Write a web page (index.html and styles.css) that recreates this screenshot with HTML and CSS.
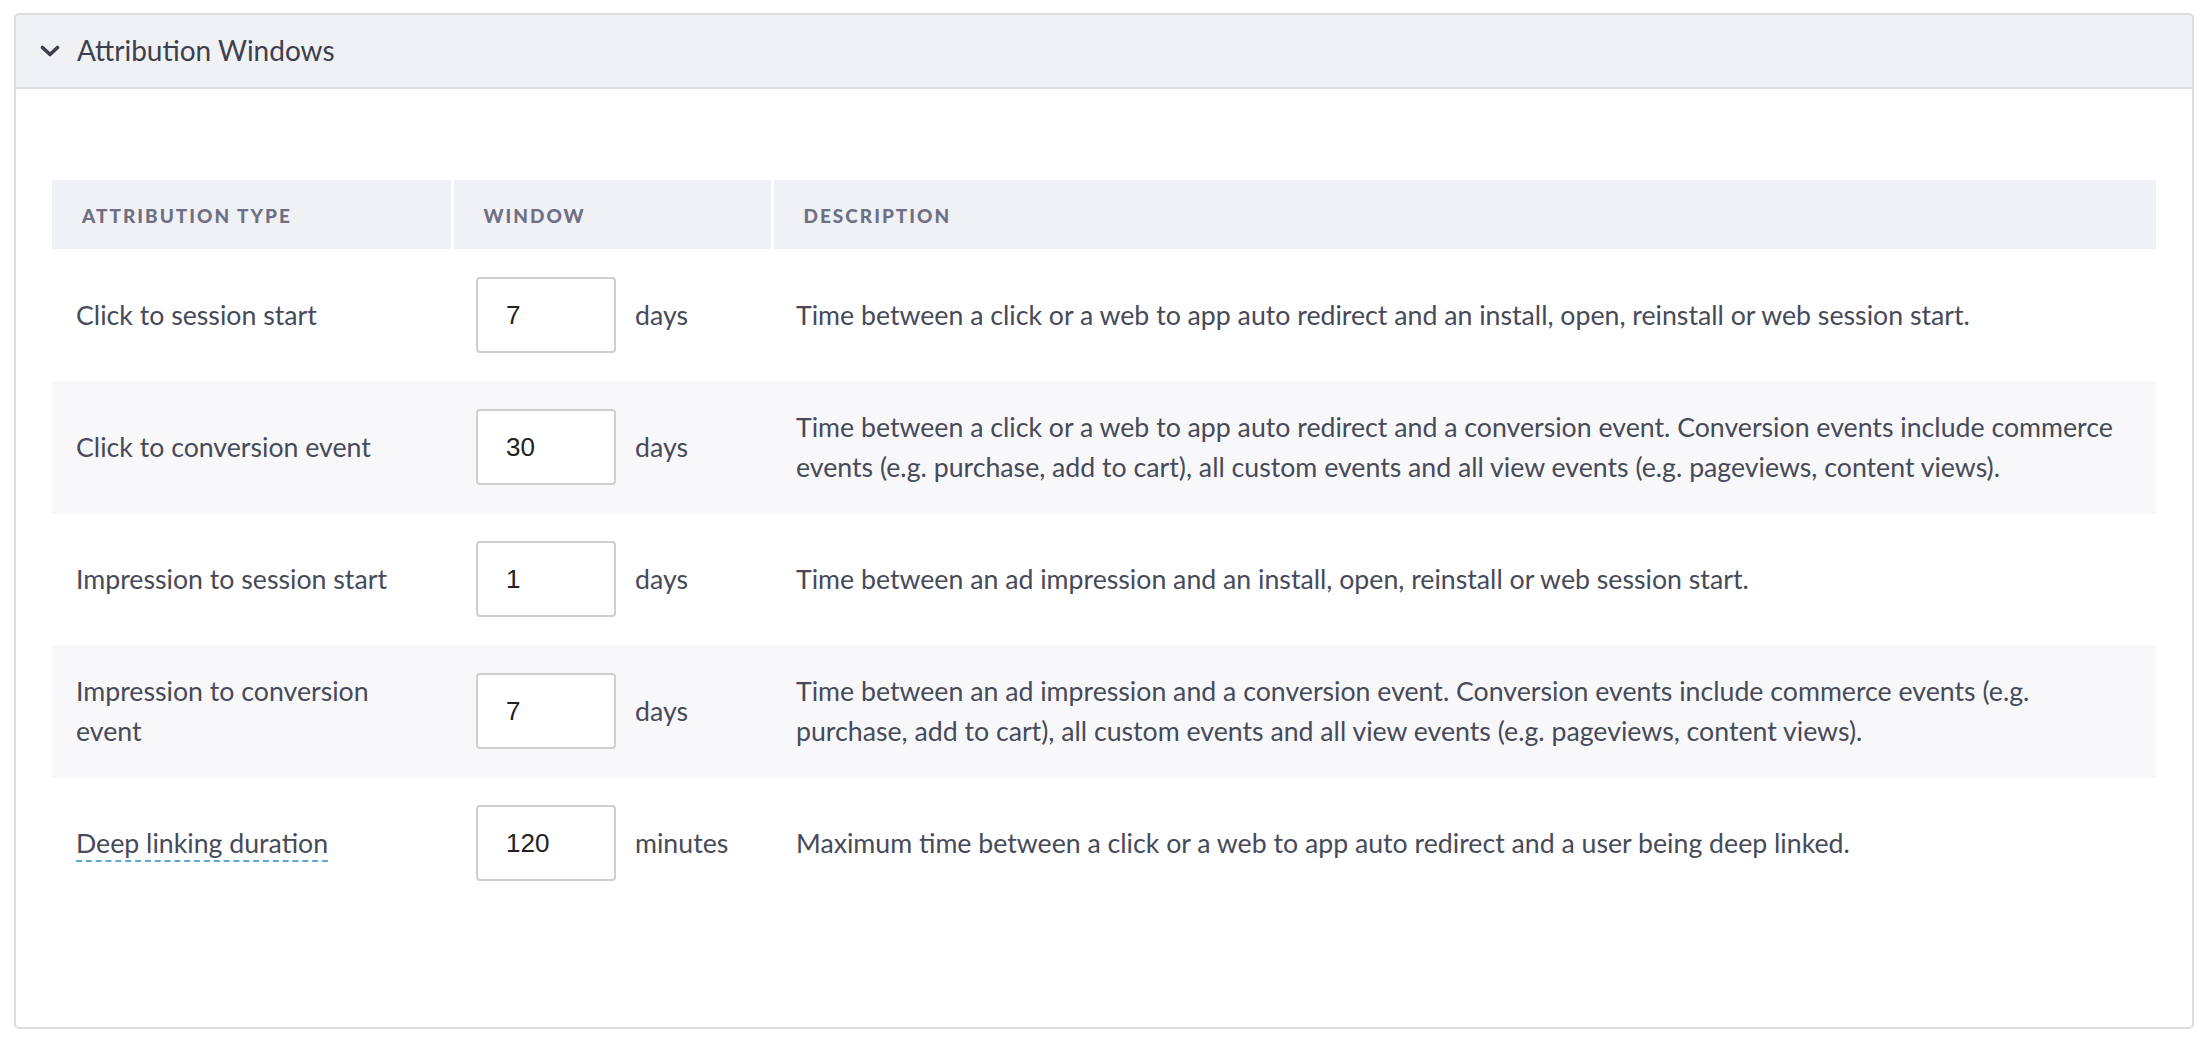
FILE: index.html
```html
<!DOCTYPE html>
<html lang="en">
<head>
<meta charset="utf-8">
<title>Attribution Windows</title>
<link rel="stylesheet" href="styles.css">
</head>
<body>
<section class="panel">
  <header class="panel-header">
    <svg class="chevron" viewBox="0 0 20 12" width="20" height="12" aria-hidden="true">
      <path d="M2.5 2.5 L10 9.5 L17.5 2.5" fill="none" stroke="currentColor" stroke-width="3.6" stroke-linecap="round" stroke-linejoin="round"/>
    </svg>
    <h2 class="panel-title">Attribution Windows</h2>
  </header>
  <div class="panel-body">
    <table class="attr-table">
      <colgroup>
        <col class="col-type">
        <col class="col-window">
        <col class="col-desc">
      </colgroup>
      <thead>
        <tr>
          <th>Attribution Type</th>
          <th>Window</th>
          <th>Description</th>
        </tr>
      </thead>
      <tbody>
        <tr>
          <td>Click to session start</td>
          <td><div class="window"><input class="num" type="text" value="7"><span class="unit">days</span></div></td>
          <td class="desc">Time between a click or a web to app auto redirect and an install, open, reinstall or web session start.</td>
        </tr>
        <tr>
          <td>Click to conversion event</td>
          <td><div class="window"><input class="num" type="text" value="30"><span class="unit">days</span></div></td>
          <td class="desc">Time between a click or a web to app auto redirect and a conversion event. Conversion events include commerce<br>events (e.g. purchase, add to cart), all custom events and all view events (e.g. pageviews, content views).</td>
        </tr>
        <tr>
          <td>Impression to session start</td>
          <td><div class="window"><input class="num" type="text" value="1"><span class="unit">days</span></div></td>
          <td class="desc">Time between an ad impression and an install, open, reinstall or web session start.</td>
        </tr>
        <tr>
          <td>Impression to conversion<br>event</td>
          <td><div class="window"><input class="num" type="text" value="7"><span class="unit">days</span></div></td>
          <td class="desc">Time between an ad impression and a conversion event. Conversion events include commerce events (e.g.<br>purchase, add to cart), all custom events and all view events (e.g. pageviews, content views).</td>
        </tr>
        <tr>
          <td><span class="term">Deep linking duration</span></td>
          <td><div class="window"><input class="num" type="text" value="120"><span class="unit">minutes</span></div></td>
          <td class="desc">Maximum time between a click or a web to app auto redirect and a user being deep linked.</td>
        </tr>
      </tbody>
    </table>
  </div>
</section>
</body>
</html>
```

FILE: styles.css
```css
* { box-sizing: border-box; }

html, body {
  margin: 0;
  padding: 0;
  background: #ffffff;
}

body {
  font-family: "Lato", "Open Sans", sans-serif;
  color: #474a59;
  padding: 13px 14px 0 14px;
}

.panel {
  width: 2180px;
  height: 1016px;
  border: 2px solid #dddde0;
  border-radius: 5px;
  overflow: hidden;
  background: #fff;
}

.panel-header {
  display: flex;
  align-items: center;
  height: 74px;
  padding: 0 0 2px 24px;
  background: #f0f1f5;
  border-bottom: 2px solid #dddde0;
  color: #3d3f4d;
}

.chevron {
  display: block;
  width: 20px;
  height: 12px;
  margin-right: 17px;
  margin-top: 2px;
}

.panel-title {
  margin: 0;
  font-size: 28px;
  font-weight: 400;
  color: #3d3f4d;
}

.panel-body {
  padding: 91px 34px 0 36px;
}

.attr-table {
  width: 2104px;
  border-collapse: collapse;
  table-layout: fixed;
}

.col-type { width: 400px; }
.col-window { width: 320px; }

.attr-table th {
  height: 69px;
  background: #f0f1f5;
  text-align: left;
  padding: 2px 20px 0 30px;
  font-size: 19px;
  font-weight: 900;
  letter-spacing: 2px;
  text-transform: uppercase;
  color: #6d7084;
  border-left: 3px solid #ffffff;
}

.attr-table th:first-child { border-left: 0; }

.attr-table td {
  height: 132px;
  padding: 0 10px 0 24px;
  font-size: 26.7px;
  line-height: 40px;
  vertical-align: middle;
  color: #474a59;
}

.attr-table td.desc {
  white-space: nowrap;
  padding-right: 0;
}

.attr-table tbody tr:nth-child(even) td {
  background: #f8f8fa;
}

.window {
  display: flex;
  align-items: center;
}

.num {
  width: 140px;
  height: 76px;
  border: 2px solid #cfcfd1;
  border-radius: 4px;
  background: #fff;
  padding: 0 0 0 28px;
  font-family: "Liberation Sans", Arial, sans-serif;
  font-size: 26px;
  color: #222222;
  outline: none;
}

.unit {
  margin-left: 19px;
}

.term {
  display: inline-block;
  line-height: 34px;
  border-bottom: 2px dashed #5fa8d3;
}
```
